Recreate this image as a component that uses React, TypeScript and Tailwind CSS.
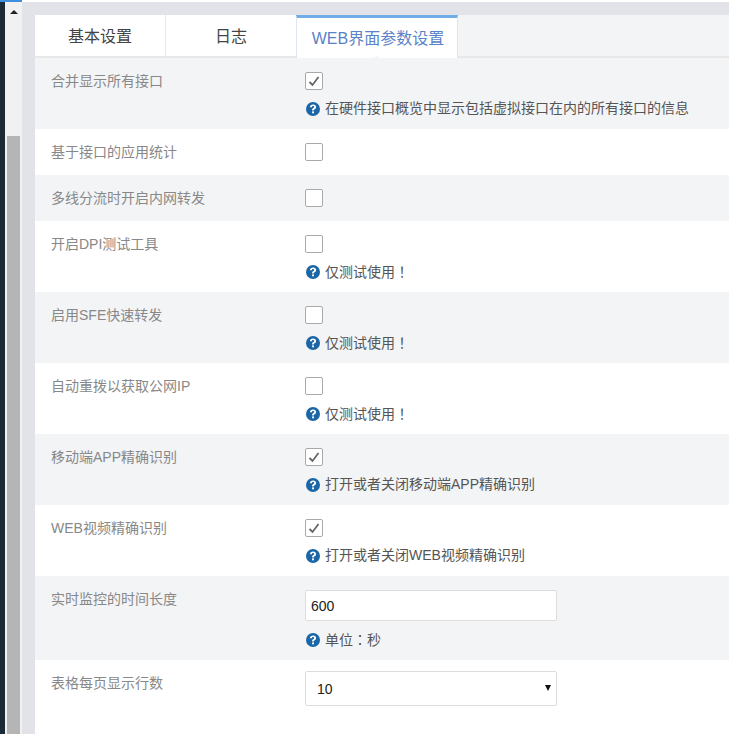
import type { ReactNode } from "react";

const font = { fontFamily: '"Liberation Sans", "Noto Sans CJK SC", sans-serif' };

function Help({ children }: { children: ReactNode }) {
  return (
    <div className="mt-[9px] flex h-[18px] items-center pl-[1px] text-[14px] text-[#555]">
      <svg width="14" height="14" viewBox="0 0 14 14" className="mr-[5px] mt-[2px] shrink-0">
        <circle cx="7" cy="7" r="7" fill="#1a66a6" />
        <path d="M3.900 5.200C4 3.400 5.300 2.400 7.100 2.400c1.800 0 3 1 3 2.500 0 1.200-.7 1.800-1.500 2.300-.6.4-.8.700-.8 1.300H6.100c0-1.200.3-1.800 1.100-2.400.6-.4 1-.7 1-1.200 0-.6-.5-.9-1.100-.9-.7 0-1.200.4-1.200 1.200z" fill="#fff" />
        <rect x="6.100" y="9.400" width="1.900" height="1.900" fill="#fff" />
      </svg>
      <span className="pt-[1px]">{children}</span>
    </div>
  );
}

function Check({ on }: { on?: boolean }) {
  return (
    <div className="flex h-[18px] w-[18px] items-center justify-center rounded-[2px] border border-[#aaa] bg-white">
      {on && (
        <svg width="12" height="11" viewBox="0 0 12 11">
          <path d="M1.500 6 L4.500 9 L10.500 1" fill="none" stroke="#666" strokeWidth="1.800" />
        </svg>
      )}
    </div>
  );
}

function Row({ label, grey, help, on, h }: { label: string; grey?: boolean; help?: ReactNode; on?: boolean; h: string }) {
  return (
    <div className={`flex pl-[16px] ${h} ${grey ? "bg-[#f3f4f6]" : "bg-white"}`}>
      <div className="w-[254px] shrink-0 pt-[14px] text-[14px] leading-[18px] text-[#888]">{label}</div>
      <div className="pt-[14px]">
        <Check on={on} />
        {help && <Help>{help}</Help>}
      </div>
    </div>
  );
}

const testOnly = (
  <>
    仅测试使用<span className="font-['Noto_Sans_CJK_TC']">！</span>
  </>
);

export default function App() {
  return (
    <div className="flex h-[734px] w-[729px] overflow-hidden bg-white" style={font}>
      <div className="flex w-[22px] shrink-0 flex-col">
        <div className="h-[2px] shrink-0 bg-[#3f8fdc]" />
        <div className="flex flex-1">
          <div className="w-[5px] shrink-0 bg-[#1c2a35]" />
          <div className="flex flex-1 flex-col items-center bg-[#f1f1f1]">
            <div className="mt-[8px] h-0 w-0 border-x-[4px] border-b-[4px] border-x-transparent border-b-[#222]" />
            <div className="mt-[122px] w-[13px] flex-1 bg-[#b5b5b5]" />
          </div>
        </div>
      </div>
      <div className="flex min-w-0 flex-1 flex-col bg-white">
        <div className="h-[2px] shrink-0 bg-white" />
        <div className="flex flex-1 flex-col bg-[#e1e3e8] pl-[13px] pt-[13px]">
          <div className="flex flex-1 flex-col bg-white">
            <div className="flex h-[43px] shrink-0 border-b-2 border-[#e8e8e8] bg-[#f3f4f6]">
              <div className="flex w-[131px] items-center justify-center border-r border-[#e8e8e8] bg-white pt-[3px] text-[16px] text-[#444]">基本设置</div>
              <div className="flex w-[130px] items-center justify-center bg-white pt-[3px] text-[16px] text-[#444]">日志</div>
              <div className="relative flex h-[43px] w-[162px] items-center justify-center border-x border-t-[3px] border-x-[#e0e6ee] border-t-[#70ade6] bg-white pl-[2px] pt-[1px] text-[16px] text-[#5a82c8]">
                WEB界面参数设置
                <div className="absolute bottom-[-2px] left-1/2 h-0 w-0 -translate-x-1/2 border-x-[6px] border-b-[4px] border-x-transparent border-b-[#f3f4f6]" />
              </div>
            </div>
            <Row h="h-[71px]" grey on label="合并显示所有接口" help="在硬件接口概览中显示包括虚拟接口在内的所有接口的信息" />
            <Row h="h-[46px]" label="基于接口的应用统计" />
            <Row h="h-[46px]" grey label="多线分流时开启内网转发" />
            <Row h="h-[71px]" label="开启DPI测试工具" help={testOnly} />
            <Row h="h-[71px]" grey label="启用SFE快速转发" help={testOnly} />
            <Row h="h-[71px]" label="自动重拨以获取公网IP" help={testOnly} />
            <Row h="h-[71px]" grey on label="移动端APP精确识别" help="打开或者关闭移动端APP精确识别" />
            <Row h="h-[71px]" on label="WEB视频精确识别" help="打开或者关闭WEB视频精确识别" />
            <div className="flex h-[84px] bg-[#f3f4f6] pl-[16px]">
              <div className="w-[254px] shrink-0 pt-[14px] text-[14px] leading-[18px] text-[#888]">实时监控的时间长度</div>
              <div className="pt-[14px]">
                <div className="flex h-[31px] w-[252px] items-center rounded-[2px] border border-[#ddd] bg-white pl-[5px] pt-[1px] text-[14px] text-[#222]">600</div>
                <Help>
                  单位<span className="font-['Noto_Sans_CJK_TC']">：</span>秒
                </Help>
              </div>
            </div>
            <div className="flex flex-1 bg-white pl-[16px]">
              <div className="w-[254px] shrink-0 pt-[14px] text-[14px] leading-[18px] text-[#888]">表格每页显示行数</div>
              <div className="pt-[11px]">
                <div className="flex h-[35px] w-[252px] items-center justify-between rounded-[2px] border border-[#ddd] bg-white pl-[11px] pr-[5px] pt-[1px] text-[14px] text-[#222]">
                  10
                  <div className="mb-[3px] h-0 w-0 border-x-[3.500px] border-t-[6px] border-x-transparent border-t-[#111]" />
                </div>
              </div>
            </div>
          </div>
        </div>
      </div>
    </div>
  );
}
